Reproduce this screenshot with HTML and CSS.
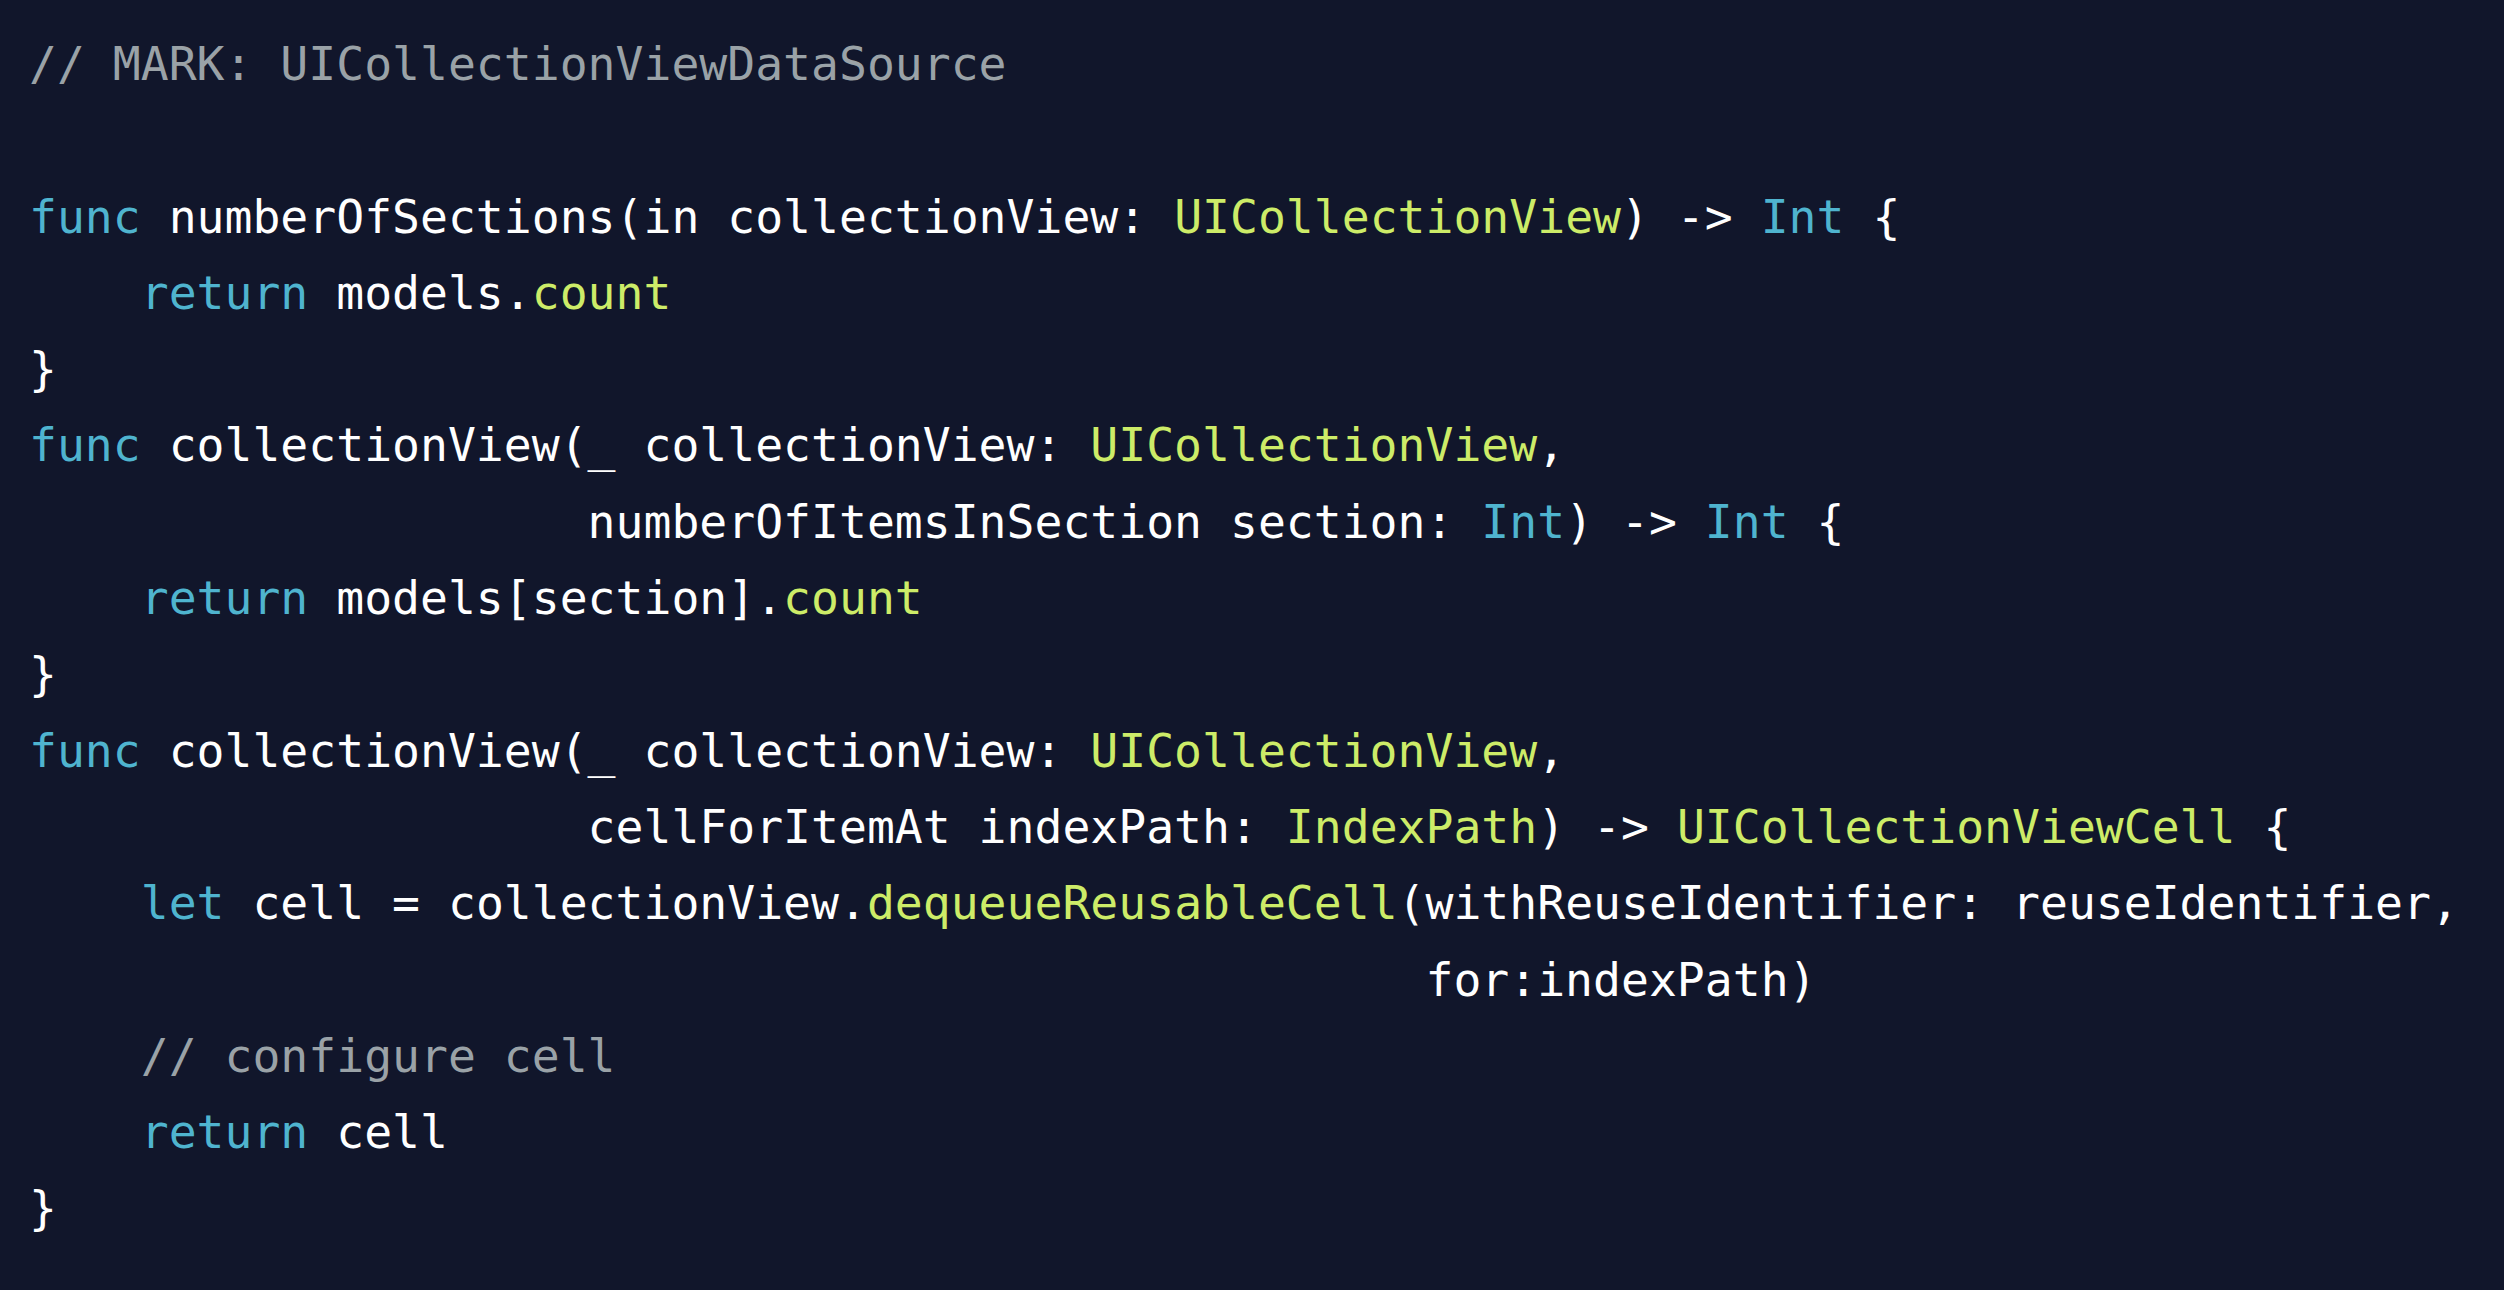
FILE: index.html
```html
<!DOCTYPE html>
<html lang="en">

<head>
    <meta charset="UTF-8">
    <meta name="viewport" content="width=device-width, initial-scale=1.0">
    <title>UICollectionViewDataSource</title>
    <link rel="stylesheet" href="styles.css">
</head>

<body>
    <!-- Code snippet -->
    <pre class="code"><span class="comment">// MARK: UICollectionViewDataSource</span>

<span class="kw">func</span> numberOfSections(in collectionView: <span class="type">UICollectionView</span>) -&gt; <span class="kw">Int</span> {
    <span class="kw">return</span> models.<span class="type">count</span>
}
<span class="kw">func</span> collectionView(_ collectionView: <span class="type">UICollectionView</span>,
                    numberOfItemsInSection section: <span class="kw">Int</span>) -&gt; <span class="kw">Int</span> {
    <span class="kw">return</span> models[section].<span class="type">count</span>
}
<span class="kw">func</span> collectionView(_ collectionView: <span class="type">UICollectionView</span>,
                    cellForItemAt indexPath: <span class="type">IndexPath</span>) -&gt; <span class="type">UICollectionViewCell</span> {
    <span class="kw">let</span> cell = collectionView.<span class="type">dequeueReusableCell</span>(withReuseIdentifier: reuseIdentifier,
                                                  for:indexPath)
    <span class="comment">// configure cell</span>
    <span class="kw">return</span> cell
}</pre>
</body>

</html>
```

FILE: styles.css
```css
html,
body {
    margin: 0;
    height: 100%;
    background-color: #11162b;
}

.code {
    margin: 0;
    padding: 26px 0 0 29px;
    font-family: "DejaVu Sans Mono", "Liberation Mono", monospace;
    font-size: 46.4px;
    line-height: 76.3px;
    color: #ffffff;
    white-space: pre;
}

.kw {
    color: #4fb4cf;
}

.type {
    color: #cdec68;
}

.comment {
    color: #9aa2a7;
}
```
